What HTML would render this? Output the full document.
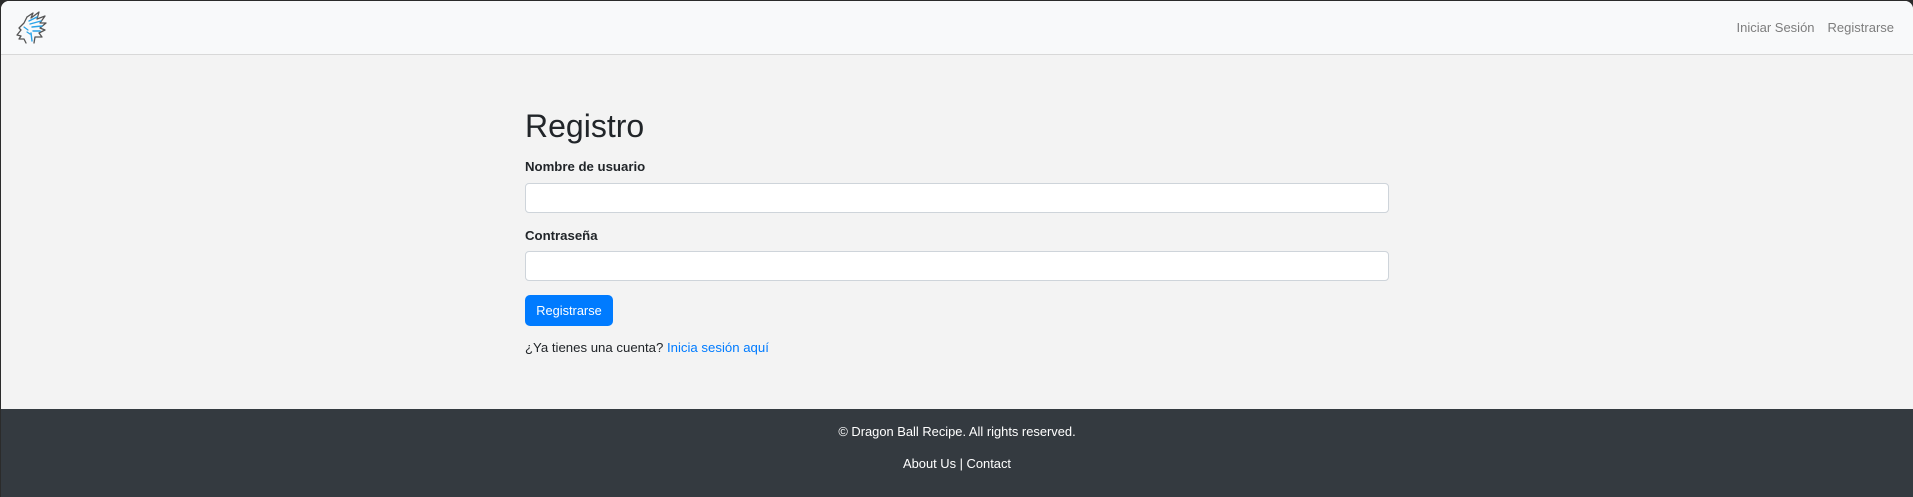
<!DOCTYPE html>
<html><head><meta charset="utf-8"><style>
*{box-sizing:border-box;margin:0;padding:0}
html,body{width:1913px;height:497px;overflow:hidden;background:#2b2b2b;font-family:"Liberation Sans",Arial,sans-serif}
.win{position:absolute;left:1px;top:1px;width:1912px;height:496px;background:#f3f3f3;border-radius:8px 8px 0 0;overflow:hidden}
nav{position:absolute;left:0;top:0;width:100%;height:54px;background:#f8f9fa;border-bottom:1px solid #d8d8d8}
.links{position:absolute;top:19px;right:19px;font-size:13px;color:#7d7d7d}
.links span{margin-left:13px}
h1{position:absolute;left:524px;top:107px;font-size:32px;font-weight:400;color:#212529}
label{position:absolute;left:524px;font-size:13.2px;font-weight:bold;color:#212529}
.inp{position:absolute;left:524px;width:864px;height:30px;background:#fff;border:1px solid #ced4da;border-radius:4px}
.btn{position:absolute;left:524px;top:294px;width:88px;height:31px;background:#007bff;border-radius:5px;color:#fff;font-size:12.8px;text-align:center;line-height:31px}
.q{position:absolute;left:524px;top:339px;font-size:13.2px;color:#212529}
.q a{color:#007bff;text-decoration:none}
footer{position:absolute;left:0;top:408px;width:100%;height:90px;background:#343a40;color:#fff;text-align:center;font-size:12.9px}
</style></head><body><div class="win">
<nav>
<svg style="position:absolute;left:14px;top:10px" width="32" height="34" viewBox="0 0 32 34" fill="none" stroke-linecap="round" stroke-linejoin="round">
<path d="M12 6 L18 2 L16 7 L24 1 L22 8 L30 5 L25 12 L31 12 L25 17 L30 19 L24 22 L27 26 L20 26 L19 32" stroke="#555" stroke-width="1.3"/>
<path d="M12 6 L9 12 L4 17 L6 19 L2 24 L6 25 L4 28 L9 28 L11 32" stroke="#555" stroke-width="1.3"/>
<path d="M14 10 L22 6 M15 13 L26 10 M17 16 L27 15 M18 20 L25 20 M16 22 L17 30" stroke="#2aa3e8" stroke-width="1.4"/>
<path d="M9 16 L13 19 M12 21 L15 23" stroke="#2aa3e8" stroke-width="1.2"/>
</svg>
<div class="links"><span>Iniciar Sesión</span><span>Registrarse</span></div>
</nav>
<h1>Registro</h1>
<label style="top:158px">Nombre de usuario</label>
<div class="inp" style="top:182px"></div>
<label style="top:227px">Contraseña</label>
<div class="inp" style="top:250px"></div>
<div class="btn">Registrarse</div>
<div class="q">¿Ya tienes una cuenta? <a>Inicia sesión aquí</a></div>
<footer>
<div style="position:absolute;top:15px;width:100%">© Dragon Ball Recipe. All rights reserved.</div>
<div style="position:absolute;top:47px;width:100%">About Us | Contact</div>
</footer>
</div></body></html>
